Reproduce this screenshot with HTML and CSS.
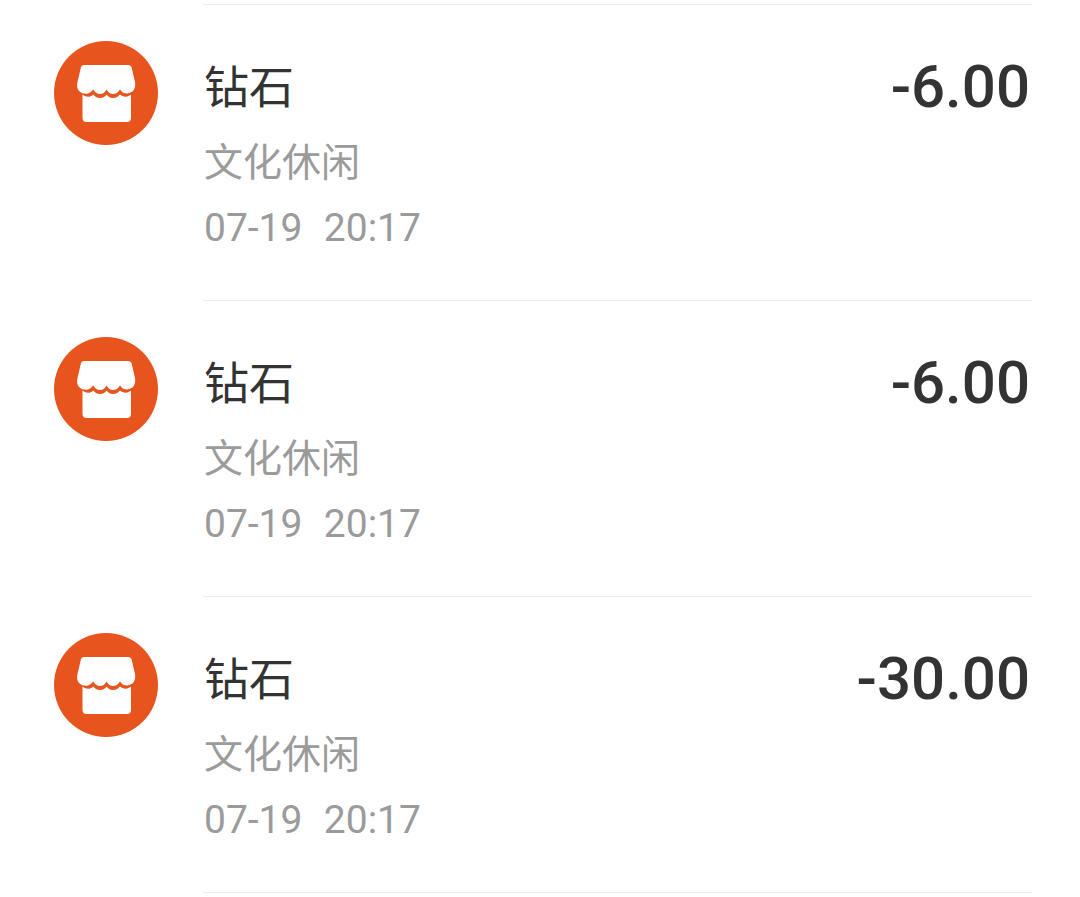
FILE: index.html
```html
<!DOCTYPE html>
<html lang="zh">
<head>
<meta charset="utf-8">
<title>账单</title>
<link rel="stylesheet" href="styles.css">
</head>
<body>
<svg width="0" height="0" class="defs">
  <symbol id="shop" viewBox="0 0 104 104">
    <path fill="#fff" d="M30 24H74Q76.500 24 77.500 26L81 41Q82 46 79 50Q75 53.500 70 52Q67.500 51 66 48.500Q63 53 59 53Q55 53 52.700 48.500Q50 53 46 53Q42 53 39.300 48.500Q37 51.500 34 52.500Q28 53.500 25 50Q22 46 23.500 41L27 26Q28 24 30 24Z"/>
    <path fill="#fff" d="M28.500 53.500Q32 56.500 36 55.500Q38 55 39.300 53.500Q42 57 46 57Q50 57 52.700 53.500Q55 57 59 57Q63 57 66 53.500Q68 55.500 71 55.800Q74 56 77 53.500V77Q77 81 73 81H32.500Q28.500 81 28.500 77Z"/>
  </symbol>
</svg>
<main class="list">
  <article class="row">
    <div class="avatar"><svg class="icon" viewBox="0 0 104 104"><use href="#shop"/></svg></div>
    <div class="body">
      <div class="info">
        <div class="title">钻石</div>
        <div class="category">文化休闲</div>
        <div class="time">07-19&nbsp; 20:17</div>
      </div>
      <div class="amount">-6.00</div>
    </div>
  </article>
  <article class="row">
    <div class="avatar"><svg class="icon" viewBox="0 0 104 104"><use href="#shop"/></svg></div>
    <div class="body">
      <div class="info">
        <div class="title">钻石</div>
        <div class="category">文化休闲</div>
        <div class="time">07-19&nbsp; 20:17</div>
      </div>
      <div class="amount">-6.00</div>
    </div>
  </article>
  <article class="row">
    <div class="avatar"><svg class="icon" viewBox="0 0 104 104"><use href="#shop"/></svg></div>
    <div class="body">
      <div class="info">
        <div class="title">钻石</div>
        <div class="category">文化休闲</div>
        <div class="time">07-19&nbsp; 20:17</div>
      </div>
      <div class="amount">-30.00</div>
    </div>
  </article>
</main>
</body>
</html>
```

FILE: styles.css
```css
* { box-sizing: border-box; }
html, body { margin: 0; padding: 0; background: #fff; }
body { height: 897px; overflow: hidden; font-family: Roboto, "Noto Sans CJK SC", sans-serif; }
.defs { position: absolute; }
.list { padding-top: 4px; }
.row { display: flex; height: 296px; padding: 0 48px 0 54px; }
.row:last-child { height: 297px; }
.avatar { flex: none; width: 104px; height: 104px; margin-top: 37px; border-radius: 50%; background: #e8541d; }
.icon { display: block; width: 104px; height: 104px; }
.body { flex: 1; display: flex; justify-content: space-between; margin-left: 45px; border-top: 1px solid #ececec; }
.row:last-child .body { border-bottom: 1px solid #ececec; }
.info { padding-top: 50px; padding-left: 1px; }
.title { font-family: "Noto Sans CJK SC", sans-serif; font-size: 45px; line-height: 60px; color: #333; }
.category { font-family: "Noto Sans CJK SC", sans-serif; font-size: 39px; line-height: 54px; margin-top: 17px; color: #9b9b9b; }
.time { font-size: 39px; line-height: 46px; margin-top: 19px; word-spacing: 1px; color: #9b9b9b; }
.amount { font-size: 60px; font-weight: 500; line-height: 70px; margin-top: 47px; padding-right: 2px; color: #333; }
```
